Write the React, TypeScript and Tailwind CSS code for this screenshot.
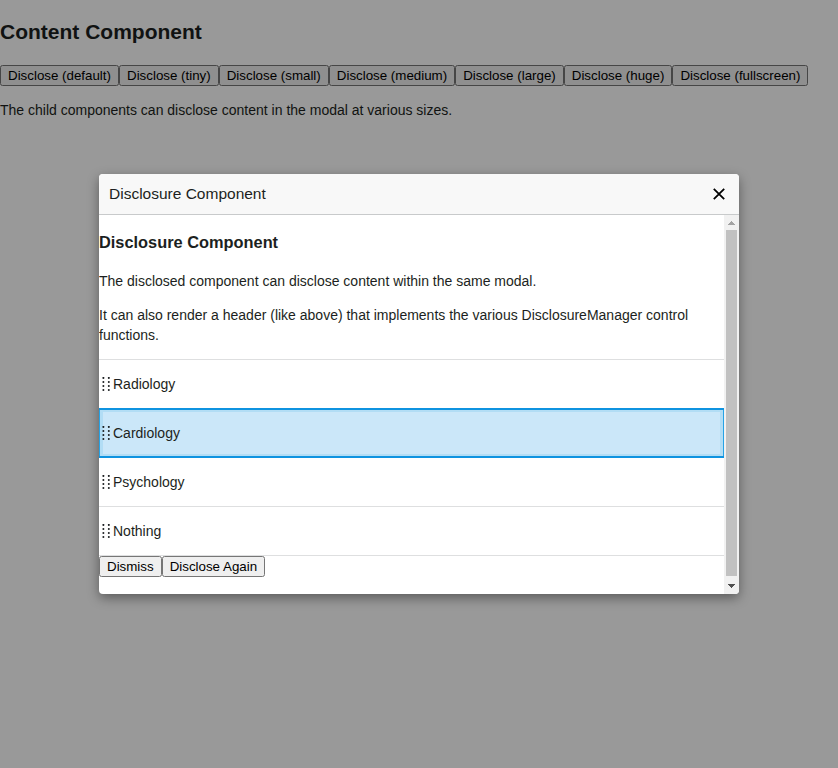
import React from 'react';

const sizes = ['default', 'tiny', 'small', 'medium', 'large', 'huge', 'fullscreen'];
const items = ['Radiology', 'Cardiology', 'Psychology', 'Nothing'];

function NativeButton({ children }: { children: React.ReactNode }) {
  return (
    <button className="[all:revert] m-0! block! h-[21px]! shrink-0 whitespace-nowrap! font-['Liberation_Sans',Arial,sans-serif]!">
      {children}
    </button>
  );
}

function Grip() {
  return (
    <svg width="14" height="14" viewBox="0 0 14 14" className="shrink-0" fill="#1c1f21">
      {[0.9, 4.9, 8.9, 12.9].map((y) =>
        [4.4, 9.8].map((x) => <circle key={`${x}-${y}`} cx={x} cy={y} r="1" />),
      )}
    </svg>
  );
}

function Row({ label, selected }: { label: string; selected: boolean }) {
  return (
    <li
      className={
        selected
          ? 'relative -mt-px flex h-[50px] items-center bg-[#cbe7f9] shadow-[inset_0_2px_0_#0f93e0,inset_0_-2px_0_#0f93e0,inset_1px_0_0_#26a2e5,inset_-1px_0_0_#26a2e5,inset_0_0_0_4px_#b2ddf5]'
          : 'flex h-[49px] items-center border-b border-[#dedfe0]'
      }
    >
      <Grip />
      <span>{label}</span>
    </li>
  );
}

function Scrollbar() {
  return (
    <div className="flex w-[15px] shrink-0 flex-col items-center bg-[#f1f1f1]">
      <svg width="15" height="15" viewBox="0 0 15 15" shapeRendering="crispEdges">
        <path d="M7 6h1v1h1v1h1v1h1v1H4V9h1V8h1V7h1z" fill="#a3a3a3" />
      </svg>
      <div className="w-[11px] flex-1 bg-[#c1c1c1]" />
      <svg width="15" height="18" viewBox="0 0 15 18" shapeRendering="crispEdges">
        <path d="M4 8h7v1h-1v1H9v1H8v1H7v-1H6v-1H5V9H4z" fill="#505050" />
      </svg>
    </div>
  );
}

export default function App() {
  return (
    <div className="relative h-[768px] w-[838px] overflow-hidden bg-white font-['Liberation_Sans',Arial,sans-serif] text-[14px] leading-[20px] text-[#1c1f21]">
      <h2 className="pt-[17px] text-[21px] leading-[30px] font-bold">Content Component</h2>
      <div className="mt-[18px] flex">
        {sizes.map((size) => (
          <NativeButton key={size}>Disclose ({size})</NativeButton>
        ))}
      </div>
      <p className="mt-[14px]">The child components can disclose content in the modal at various sizes.</p>

      <div className="absolute inset-0 flex items-center justify-center bg-black/40">
        <section className="flex h-[420px] w-[640px] flex-col overflow-hidden rounded-[4px] bg-white shadow-[0_4px_12px_rgba(0,0,0,0.4)]">
          <header className="flex h-[41px] shrink-0 items-center justify-between border-b border-[#c8cacb] bg-[#f8f8f8] pr-[14px] pl-[10px]">
            <span className="text-[15.5px]">Disclosure Component</span>
            <svg width="12" height="12" viewBox="0 0 12 12" stroke="#000" strokeWidth="1.8">
              <path d="M0.8 0.8l10.4 10.4M11.2 0.8L0.8 11.2" />
            </svg>
          </header>
          <div className="flex min-h-0 flex-1">
            <div className="w-[625px]">
              <h3 className="mt-[15px] text-[16.38px] leading-[24px] font-bold">Disclosure Component</h3>
              <p className="mt-[17px]">The disclosed component can disclose content within the same modal.</p>
              <p className="mt-[14px]">
                It can also render a header (like above) that implements the various DisclosureManager control functions.
              </p>
              <ul className="mt-[14px] border-t border-[#dedfe0]">
                {items.map((item) => (
                  <Row key={item} label={item} selected={item === 'Cardiology'} />
                ))}
              </ul>
              <div className="flex">
                <NativeButton>Dismiss</NativeButton>
                <NativeButton>Disclose Again</NativeButton>
              </div>
            </div>
            <Scrollbar />
          </div>
        </section>
      </div>
    </div>
  );
}
